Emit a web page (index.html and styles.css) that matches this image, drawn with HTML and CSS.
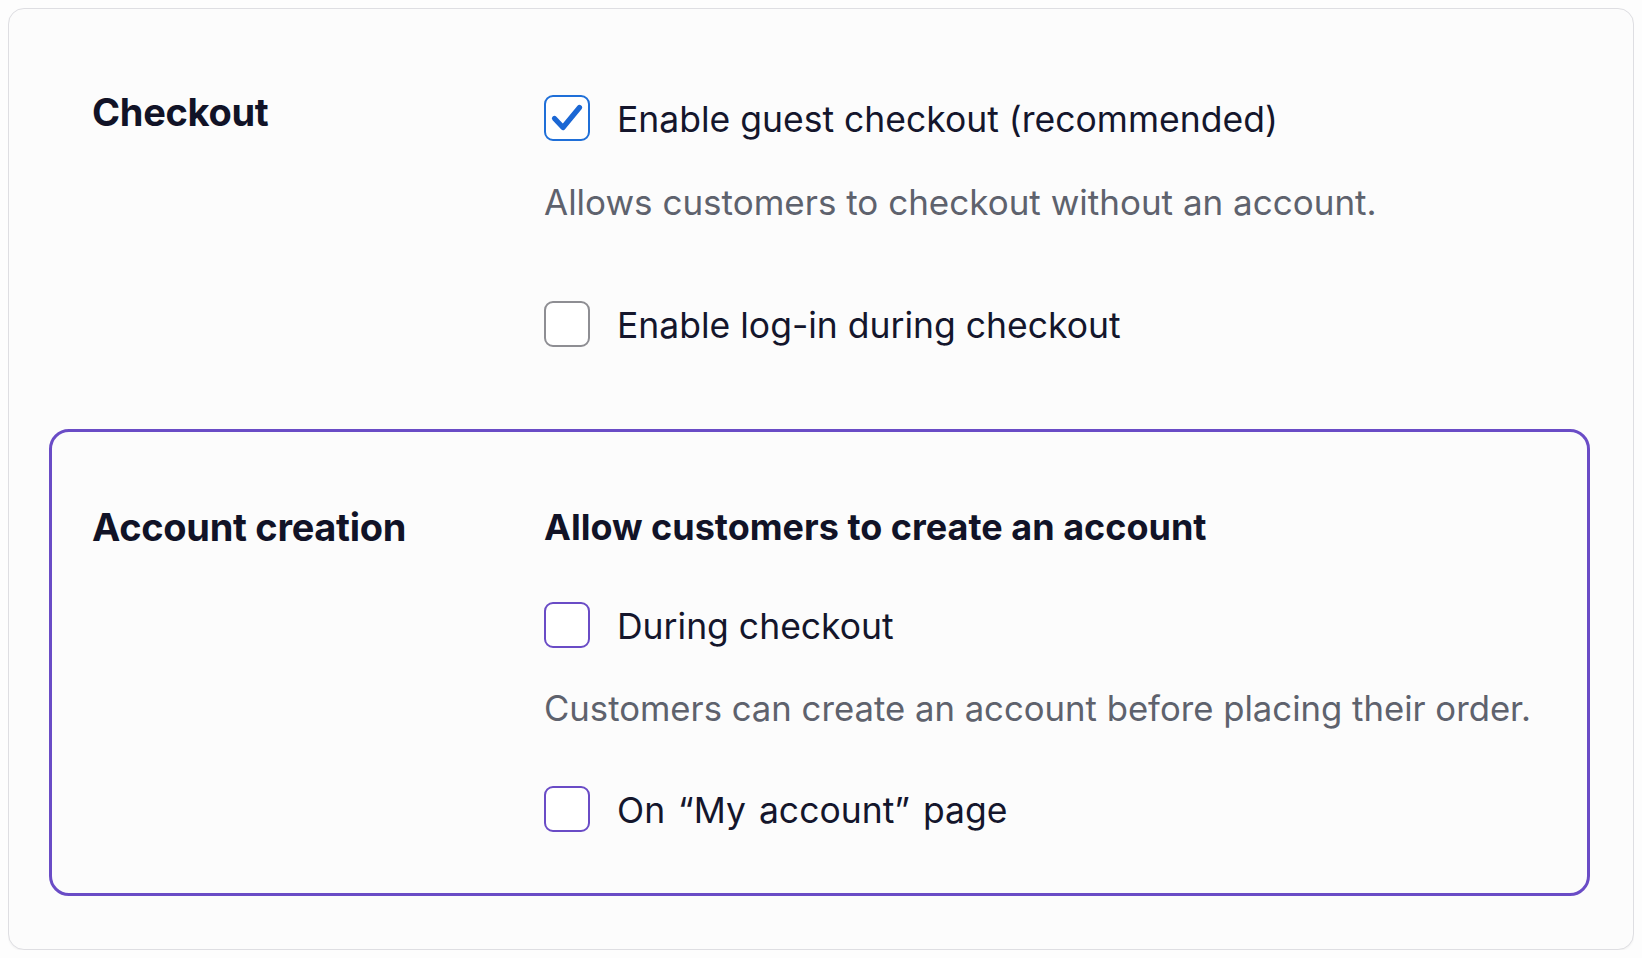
FILE: index.html
```html
<!DOCTYPE html>
<html lang="en">
<head>
<meta charset="utf-8">
<title>Checkout settings</title>
<link rel="stylesheet" href="styles.css">
</head>
<body>
<div class="card">
  <section class="section section-plain">
    <h2 class="section-title">Checkout</h2>
    <div class="section-body">
      <label class="option option-first">
        <span class="box box-checked">
          <svg viewBox="0 0 42 42" width="42" height="42" aria-hidden="true"><path d="M8.5 21.5 L17 30.5 L33.5 10.5" fill="none" stroke="#1b67d4" stroke-width="5.2" stroke-linecap="round" stroke-linejoin="round"/></svg>
        </span>
        <span class="option-label">Enable guest checkout (recommended)</span>
      </label>
      <p class="help help-first">Allows customers to checkout without an account.</p>
      <label class="option option-second">
        <span class="box box-gray"></span>
        <span class="option-label">Enable log-in during checkout</span>
      </label>
    </div>
  </section>

  <section class="section section-highlight">
    <h2 class="section-title">Account creation</h2>
    <div class="section-body">
      <h3 class="group-title">Allow customers to create an account</h3>
      <label class="option option-during">
        <span class="box box-purple"></span>
        <span class="option-label">During checkout</span>
      </label>
      <p class="help help-second">Customers can create an account before placing their order.</p>
      <label class="option option-myaccount">
        <span class="box box-purple"></span>
        <span class="option-label label-quoted">On “My account” page</span>
      </label>
    </div>
  </section>
</div>
</body>
</html>
```
FILE: styles.css
```css
html, body {
  background: #fdfdfd;
}
body {
  margin: 8px;
  font-family: Inter, "Liberation Sans", sans-serif;
  color: #13152b;
}
.card {
  box-sizing: border-box;
  height: 942px;
  border: 1px solid #dedee2;
  border-radius: 16px;
  background: #fcfcfc;
  box-shadow: 0 1px 2px rgba(0,0,0,0.05);
  padding: 40px 43px 55px 40px;
}
.section {
  display: grid;
  grid-template-columns: 452px 1fr;
  align-items: start;
  border: 3px solid transparent;
  border-radius: 20px;
  padding: 0 40px;
}
.section-plain {
  padding-top: 37px;
  padding-bottom: 77px;
}
.section-highlight {
  border-color: #6a4cc6;
  padding-top: 72px;
  padding-bottom: 59px;
}
.section-title {
  margin: 0;
  font-size: 38px;
  line-height: 46px;
  font-weight: 700;
  letter-spacing: -0.3px;
  color: #111327;
}
.section-body {
  display: flex;
  flex-direction: column;
  align-items: flex-start;
}
.group-title {
  margin: 0;
  font-size: 36px;
  line-height: 46px;
  font-weight: 700;
  color: #111327;
}
.option {
  display: flex;
  align-items: flex-start;
  gap: 27px;
}
.option-first { margin-top: 6px; }
.option-second { margin-top: 76px; }
.option-during { margin-top: 52px; }
.option-myaccount { margin-top: 55px; }
.option-label {
  margin-top: 2px;
  font-size: 35.5px;
  line-height: 46px;
  color: #14162c;
}
.label-quoted {
  word-spacing: 3px;
}
.box {
  box-sizing: border-box;
  width: 46px;
  height: 46px;
  flex: none;
  border: 2px solid #8e8e93;
  border-radius: 9px;
  background: #fff;
}
.box svg { display: block; }
.box-checked { border-color: #1f6fd8; }
.box-gray { border-color: #8e8e93; }
.box-purple { border-color: #6a4cc6; }
.help {
  font-size: 35px;
  line-height: 46px;
  color: #5e626d;
}
.help-first { margin: 36px 0 0; }
.help-second {
  margin: 35px 0 0;
  font-size: 34.7px;
}
```
